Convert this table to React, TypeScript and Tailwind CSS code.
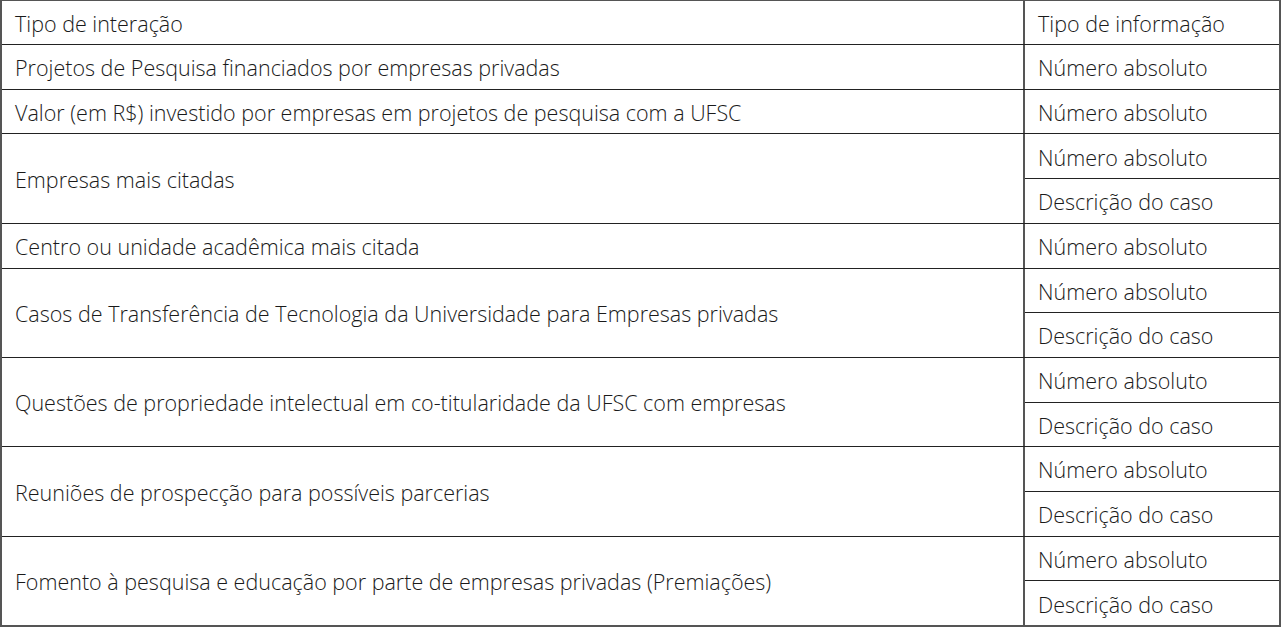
import React from 'react';

type Row = { label: string; info: string[] };

const rows: Row[] = [
  { label: 'Projetos de Pesquisa financiados por empresas privadas', info: ['Número absoluto'] },
  { label: 'Valor (em R$) investido por empresas em projetos de pesquisa com a UFSC', info: ['Número absoluto'] },
  { label: 'Empresas mais citadas', info: ['Número absoluto', 'Descrição do caso'] },
  { label: 'Centro ou unidade acadêmica mais citada', info: ['Número absoluto'] },
  {
    label: 'Casos de Transferência de Tecnologia da Universidade para Empresas privadas',
    info: ['Número absoluto', 'Descrição do caso'],
  },
  {
    label: 'Questões de propriedade intelectual em co-titularidade da UFSC com empresas',
    info: ['Número absoluto', 'Descrição do caso'],
  },
  { label: 'Reuniões de prospecção para possíveis parcerias', info: ['Número absoluto', 'Descrição do caso'] },
  {
    label: 'Fomento à pesquisa e educação por parte de empresas privadas (Premiações)',
    info: ['Número absoluto', 'Descrição do caso'],
  },
];

export default function App() {
  return (
    <div className="w-[1281px] h-[627px] bg-white text-[#1a1a1a] text-[21.5px] font-light font-['Open_Sans',sans-serif] whitespace-nowrap">
      <div className="flex flex-col h-full border-t border-l-2 border-r-2 border-b-2 border-[#555]">
        <div className="flex h-[44.7px] border-b border-[#222]">
          <div className="w-[1021px] flex items-center pl-[13px] pt-[3px]">Tipo de interação</div>
          <div className="flex-1 flex items-center pl-[13px] pt-[3px] border-l-2 border-[#555]">
            Tipo de informação
          </div>
        </div>
        {rows.map((row, i) => (
          <div
            key={row.label}
            className={'flex ' + (i < rows.length - 1 ? 'border-b border-[#222]' : '')}
          >
            <div className="w-[1021px] flex items-center pl-[13px] pt-[3px]">{row.label}</div>
            <div className="flex-1 flex flex-col border-l-2 border-[#555]">
              {row.info.map((t, j) => (
                <div
                  key={t}
                  className={
                    'flex items-center pl-[13px] pt-[3px] ' +
                    (j < row.info.length - 1 ? 'h-[44.7px] border-b border-[#222]' : 'h-[43.7px]')
                  }
                >
                  {t}
                </div>
              ))}
            </div>
          </div>
        ))}
      </div>
    </div>
  );
}
